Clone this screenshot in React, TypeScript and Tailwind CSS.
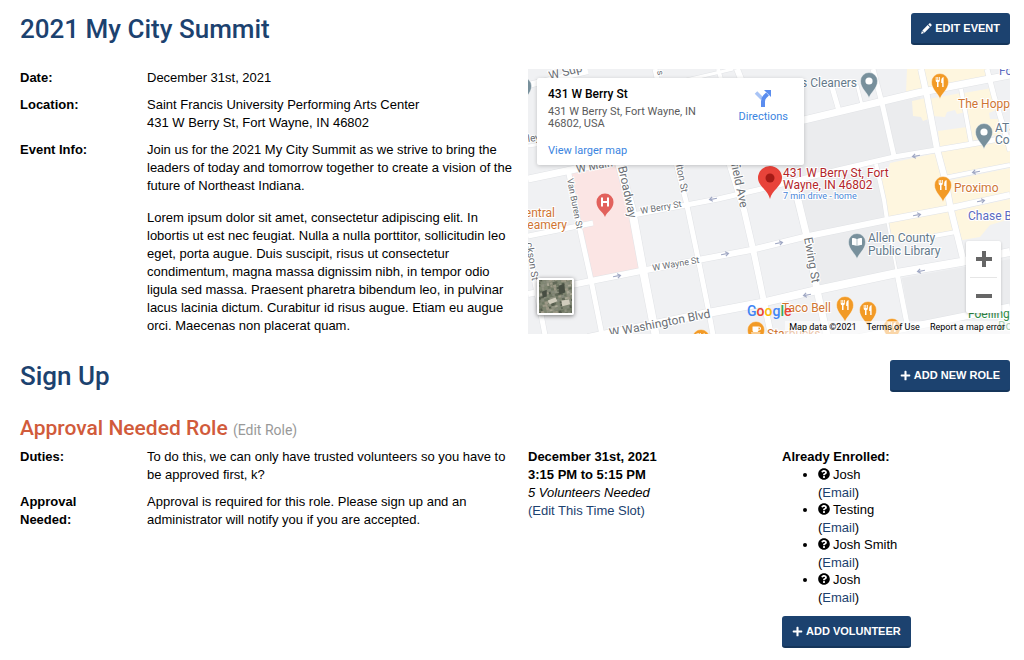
import React from "react";
import { FaPlus, FaQuestionCircle, FaCoffee, FaBookOpen } from "react-icons/fa";

type Pt = [number, number];

const line = (pts: Pt[]) => "M" + pts.map((p) => p.join(" ")).join("L");

const roads: { w: number; pts: Pt[] }[] = [
  { w: 7, pts: [[0, 110], [43, 101], [276, 51], [389, 24], [482, 6]] },
  { w: 5, pts: [[0, 167], [65, 154]] },
  { w: 5, pts: [[105, 146], [190, 130], [246, 117], [310, 101], [366, 88], [450, 74], [482, 68]] },
  { w: 6, pts: [[0, 225], [63, 212], [113, 202], [170, 191], [223, 181], [276, 168], [359, 151], [423, 139], [482, 126]] },
  { w: 8, pts: [[60, 269], [180, 244], [233, 234], [289, 221], [369, 204], [433, 193], [482, 183]] },
  { w: 7, pts: [[290, 277], [378, 259], [482, 238]] },
  { w: 4, pts: [[416, 109], [446, 103], [482, 96]] },
  { w: 4, pts: [[406, 167], [428, 163]] },
  { w: 3, pts: [[0, 77], [30, 73]] },
  { w: 6, pts: [[0, 16], [60, 2]] },
  { w: 3, pts: [[158, 11], [205, 0]] },
  { w: 5, pts: [[40, 100], [52, 161], [63, 211], [74, 266]] },
  { w: 8, pts: [[90, 90], [104, 141], [115, 201], [128, 268]] },
  { w: 5, pts: [[127, 0], [147, 90], [158, 132], [171, 194], [181, 244], [185, 266]] },
  { w: 4, pts: [[190, 0], [196, 20]] },
  { w: 6, pts: [[209, 0], [215, 15]] },
  { w: 6, pts: [[200, 90], [216, 141], [225, 180], [235, 228], [243, 266]] },
  { w: 7, pts: [[262, 112], [270, 131], [279, 168], [289, 221], [299, 266]] },
  { w: 5, pts: [[304, 18], [311, 42]] },
  { w: 3, pts: [[329, 16], [334, 36]] },
  { w: 5, pts: [[345, 0], [354, 34], [366, 87]] },
  { w: 4, pts: [[348, 95], [356, 131], [359, 151]] },
  { w: 2, pts: [[359, 151], [369, 204]] },
  { w: 5, pts: [[369, 204], [380, 260]] },
  { w: 6, pts: [[393, 0], [399, 27], [409, 80], [417, 110], [423, 141], [436, 194]] },
  { w: 4, pts: [[433, 20], [443, 74]] },
  { w: 5, pts: [[459, 0], [466, 27], [479, 70], [482, 82]] },
  { w: 5, pts: [[0, 176], [7, 214], [17, 266]] },
];

const commercial = [
  "379,0 393,0 397,21 378,24",
  "384,32 398,29 403,49 395,52 393,48 385,47",
  "401,30 433,24 438,43 429,45 427,41 419,43 417,48 405,47",
  "410,62 439,58 443,73 412,79",
  "396,0 459,0 462,10 399,22",
  "436,24 464,19 470,40 461,44 462,50 473,50 476,64 444,72",
  "362,94 409,84 423,139 361,151 358,140 352,112 358,106",
  "361,153 422,141 427,161 400,168 364,173",
  "412,82 482,71 482,94 418,106",
  "418,112 482,99 482,124 424,136",
  "426,142 482,130 482,150 462,156 452,168 434,171",
];

const arrows: [number, number, boolean][] = [
  [185, 130, true],
  [89, 207, false],
  [197, 185, false],
  [251, 174, false],
  [389, 146, false],
  [453, 132, false],
  [388, 87, true],
  [448, 103, true],
  [393, 202, true],
  [279, 226, true],
];

type PinIcon = "fork" | "coffee" | "book" | "dot";

function Pin({ x, y, color, icon }: { x: number; y: number; color: string; icon: PinIcon }) {
  return (
    <g transform={`translate(${x} ${y})`}>
      <path
        d="M0 17C-1.500 11.500-8.500 7.500-8.500 0A8.500 8.500 0 0 1 8.500 0C8.500 7.500 1.500 11.500 0 17Z"
        fill={color}
        stroke="#fff"
        strokeOpacity=".6"
        strokeWidth=".7"
      />
      {icon === "dot" && <circle r="3.600" fill="#fff" />}
      {icon === "fork" && (
        <path
          d="M-4.300-5v3.500c0 1 .6 1.600 1.300 1.800V5h1.500V.3c.7-.2 1.300-.8 1.300-1.800V-5H-1v3h-.7v-3h-1v3h-.7v-3zM3.600-5C2-4.600 1.200-3 1.200-1.500V1h1V5h1.400z"
          fill="#fff"
        />
      )}
      {icon === "coffee" && <FaCoffee x={-5} y={-5} size={10} color="#fff" />}
      {icon === "book" && <FaBookOpen x={-5} y={-5} size={10} color="#fff" />}
    </g>
  );
}

function MapDrawing() {
  return (
    <svg
      className="block h-full w-full"
      viewBox="0 0 482 265"
      preserveAspectRatio="xMidYMid slice"
      fontFamily="Roboto, sans-serif"
      role="img"
      aria-label="Map of downtown Fort Wayne"
    >
      <rect width="482" height="265" fill="#f0f1f3" />
      <path d="M276 54 354 36 392 28 409 82 310 100 262 112ZM262 118 348 99 369 204 290 221ZM374 209 436 198 482 190V236L382 256Z" fill="#ebecee" />
      {commercial.map((p) => (
        <polygon key={p} points={p} fill="#fef6df" />
      ))}
      <polygon points="43,101 92,92 111,200 64,209" fill="#fbe5e4" />
      {roads.map((r, i) => (
        <path key={i} d={line(r.pts)} stroke="#e1e3e6" strokeWidth={r.w + 1} fill="none" />
      ))}
      {roads.map((r, i) => (
        <path key={i} d={line(r.pts)} stroke="#fff" strokeWidth={r.w} fill="none" />
      ))}
      {arrows.map(([x, y, left], i) => (
        <path
          key={i}
          transform={`translate(${x} ${y}) rotate(${left ? 169 : -11})`}
          d="M-4 0H3M.5-2.200 3.500 0 .5 2.200"
          stroke="#a0a8c4"
          strokeWidth="1.200"
          fill="none"
        />
      ))}

      <g fill="#6b6f75" stroke="#fff" strokeWidth="2" paintOrder="stroke">
        <text fontSize="12" transform="translate(22 11) rotate(-15)">W Sup</text>
        <text fontSize="9" transform="translate(129 2) rotate(80)">s</text>
        <text fontSize="10" transform="translate(0 73) rotate(-8)">ley</text>
        <text fontSize="11" transform="translate(49 104) rotate(-11)">W Main</text>
        <text fontSize="9" transform="translate(39 110) rotate(79)">Van Buren St</text>
        <text fontSize="12" transform="translate(90 98) rotate(78)">Broadway</text>
        <text fontSize="10" transform="translate(148 96) rotate(79)">lton St</text>
        <text fontSize="12" transform="translate(203 95) rotate(78)">field Ave</text>
        <text fontSize="9" transform="translate(113 145) rotate(-10)">W Berry St</text>
        <text fontSize="9" transform="translate(125 202) rotate(-10)">W Wayne St</text>
        <text fontSize="12" transform="translate(82 268) rotate(-11)">W Washington Blvd</text>
        <text fontSize="12" transform="translate(276 169) rotate(80)">Ewing St</text>
        <text fontSize="10" transform="translate(-2 174) rotate(81)">ckson St</text>
      </g>

      <Pin x={-5} y={17} color="#78909c" icon="dot" />
      <Pin x={341} y={12} color="#78909c" icon="dot" />
      <Pin x={412} y={13} color="#f29a26" icon="fork" />
      <Pin x={456} y={63} color="#78909c" icon="dot" />
      <Pin x={415} y={116} color="#f29a26" icon="fork" />
      <Pin x={329} y={173} color="#78909c" icon="book" />
      <Pin x={317} y={236} color="#f29a26" icon="fork" />
      <Pin x={340} y={241} color="#f29a26" icon="fork" />
      <Pin x={364} y={258} color="#f29a26" icon="fork" />
      <Pin x={228} y={261} color="#f29a26" icon="coffee" />
      <Pin x={173} y={269} color="#f29a26" icon="fork" />
      <g transform="translate(77 133)">
        <path d="M0 15C-1.500 10-8.500 7.500-8.500 0A8.500 8.500 0 0 1 8.500 0C8.500 7.500 1.500 10 0 15Z" fill="#e2615c" />
        <path d="M-3-4.500V4.500M3-4.500V4.500M-3 0H3" stroke="#fff" strokeWidth="2" fill="none" />
      </g>

      <g stroke="#fff" strokeWidth="2" paintOrder="stroke" fontSize="12">
        <g fill="#64798a">
          <text x="273" y="18">s Cleaners</text>
          <text x="467" y="63">AT&amp;T</text>
          <text x="467" y="75">Co</text>
          <text x="340" y="173">Allen County</text>
          <text x="340" y="186">Public Library</text>
        </g>
        <g fill="#cf7532">
          <text x="430" y="39">The Hopp</text>
          <text x="426" y="123">Proximo</text>
          <text x="27" y="148" textAnchor="end">entral</text>
          <text x="39" y="160" textAnchor="end">eamery</text>
          <text x="254" y="243">Taco Bell</text>
          <text x="239" y="269">Starbucks</text>
        </g>
        <g fill="#5c6bc0">
          <text x="471" y="6">Fo</text>
          <text x="440" y="151">Chase B</text>
        </g>
        <g fill="#2e8b45">
          <text x="440" y="249">Foelling</text>
          <text x="470" y="261">Bo</text>
        </g>
        <g fill="#b3262a">
          <text x="255" y="108">431 W Berry St, Fort</text>
          <text x="255" y="120">Wayne, IN 46802</text>
        </g>
        <text x="255" y="130" fontSize="9" fill="#4a86d8">7 min drive - home</text>
      </g>

      <path d="M242 130C240 121 230 117 230 109A12 12 0 0 1 254 109C254 117 244 121 242 130Z" fill="#e8433a" />
      <circle cx="242" cy="109" r="4.500" fill="#a51b16" />
    </svg>
  );
}

function Satellite() {
  const tones = ["#6f7764", "#8f9180", "#626958", "#aaa896", "#7f8672", "#555c4d", "#9d9987", "#85897a"];
  const cells = Array.from({ length: 196 }, (_, i) => ({
    x: (i % 14) * 3 - 4,
    y: Math.floor(i / 14) * 3 - 4,
    t: tones[Math.floor(Math.abs(Math.sin(i * 12.9898) * 43758.5453)) % 8],
  }));
  return (
    <svg className="block h-full w-full" viewBox="0 0 34 34" aria-hidden="true">
      <rect width="34" height="34" fill="#7f8470" />
      <g transform="rotate(-12 17 17)">
        {cells.map((c, i) => (
          <rect key={i} x={c.x} y={c.y} width={2 + (i % 3)} height={2 + (i % 2)} fill={c.t} />
        ))}
      </g>
      <path d="M9 21 17 18 19 22 11 25ZM23 21 31 20 32 25 24 27Z" fill="#d0ccbc" />
      <path d="M20 6 26 4 27 13 21 15ZM3 12 8 10 8 17 4 18Z" fill="#474d42" />
    </svg>
  );
}

function EventMap() {
  return (
    <div className="relative h-[265px] overflow-hidden font-['Roboto',sans-serif]">
      <MapDrawing />
      <div className="absolute top-[9px] left-[9px] flex w-[267px] justify-between rounded-xs bg-white pt-[9px] pr-4 pb-2 pl-[11px] shadow-[0_1px_4px_rgba(0,0,0,0.2)]">
        <div className="w-[160px]">
          <div className="text-[12px] leading-[14px] font-medium text-black">431 W Berry St</div>
          <div className="mt-[5px] text-[11px] leading-[12px] text-[#5b5b5b]">431 W Berry St, Fort Wayne, IN 46802, USA</div>
          <a href="#map" className="mt-[14px] block text-[11px] leading-[13px] text-[#3a84df]">View larger map</a>
        </div>
        <a href="#directions" className="flex flex-col items-center text-[11px] leading-[13px] text-[#3a84df]">
          <svg className="mt-0.5 mb-[3px] h-[18px] w-[18px]" viewBox="0 0 18 18" aria-hidden="true">
            <path d="M2 3.500 8 9.500" stroke="#a9c4f6" strokeWidth="3.500" fill="none" />
            <path d="M9 18V12.500Q9 9.500 11 7.500L13.500 5" stroke="#5b8def" strokeWidth="4" fill="none" />
            <path d="M10 1H17V8Z" fill="#5b8def" />
          </svg>
          Directions
        </a>
      </div>
      <button type="button" aria-label="Show satellite imagery" className="absolute top-[209px] left-[9px] h-[37px] w-[37px] rounded-xs border-2 border-white shadow-[0_1px_4px_rgba(0,0,0,0.5)]">
        <Satellite />
      </button>
      <div className="absolute right-[9px] bottom-[21px] flex w-[35px] flex-col items-center rounded-xs bg-white shadow-[0_1px_3px_rgba(0,0,0,0.2)]">
        <button type="button" aria-label="Zoom in" className="flex h-9 w-full items-center justify-center">
          <svg className="h-4 w-4" viewBox="0 0 16 16"><path d="M0 8H16M8 0V16" stroke="#666" strokeWidth="4" /></svg>
        </button>
        <div className="h-px w-[27px] bg-[#e6e6e6]" />
        <button type="button" aria-label="Zoom out" className="flex h-[35px] w-full items-center justify-center">
          <svg className="h-4 w-4" viewBox="0 0 16 16"><path d="M0 8H16" stroke="#666" strokeWidth="4" /></svg>
        </button>
      </div>
      <div className="absolute top-[234px] left-[219px] text-[14px] leading-[16px] font-medium" aria-label="Google">
        <span className="text-[#4285f4]">G</span>
        <span className="text-[#ea4335]">o</span>
        <span className="text-[#fbbc05]">o</span>
        <span className="text-[#4285f4]">g</span>
        <span className="text-[#34a853]">l</span>
        <span className="text-[#ea4335]">e</span>
      </div>
      <div className="absolute right-0 bottom-0 flex gap-[10px] bg-white/60 pr-[5px] pl-1 text-[9px] leading-[13px] text-black">
        <span>Map data ©2021</span>
        <a href="#terms">Terms of Use</a>
        <a href="#report">Report a map error</a>
      </div>
    </div>
  );
}

function ActionButton({ icon, children }: { icon: React.ReactNode; children: React.ReactNode }) {
  return (
    <button
      type="button"
      className="flex h-8 shrink-0 items-center gap-[3px] rounded-[3px] border-b-2 border-[#15355a] bg-[#1c426f] px-[10px] text-[11px] leading-4 font-bold text-white uppercase"
    >
      {icon}
      {children}
    </button>
  );
}

const Pencil = () => (
  <svg className="h-[11px] w-[11px]" viewBox="0 0 11 11" fill="#fff" aria-hidden="true">
    <path d="M8.200.6a1 1 0 0 1 1.400 0l.8.8a1 1 0 0 1 0 1.400l-.9.900L7.300 1.500zM6.700 2.100 8.900 4.300 3.500 9.700 1.300 7.500zM.9 8 3 10.100.1 10.900z" />
  </svg>
);

const intro = [
  "Join us for the 2021 My City Summit as we strive to bring the",
  "leaders of today and tomorrow together to create a vision of the",
  "future of Northeast Indiana.",
];

const lorem = [
  "Lorem ipsum dolor sit amet, consectetur adipiscing elit. In",
  "lobortis ut est nec feugiat. Nulla a nulla porttitor, sollicitudin leo",
  "eget, porta augue. Duis suscipit, risus ut consectetur",
  "condimentum, magna massa dignissim nibh, in tempor odio",
  "ligula sed massa. Praesent pharetra bibendum leo, in pulvinar",
  "lacus lacinia dictum. Curabitur id risus augue. Etiam eu augue",
  "orci. Maecenas non placerat quam.",
];

const duties = ["To do this, we can only have trusted volunteers so you have to", "be approved first, k?"];

function Lines({ lines }: { lines: string[] }) {
  return (
    <p className="whitespace-nowrap">
      {lines.map((text) => (
        <React.Fragment key={text}>
          {text}
          <br />
        </React.Fragment>
      ))}
    </p>
  );
}

function Field({ label, children }: { label: string; children: React.ReactNode }) {
  return (
    <div className="grid grid-cols-4 gap-x-[26px]">
      <dt className="font-bold">{label}</dt>
      <dd className="col-span-3 flex flex-col gap-[14px]">{children}</dd>
    </div>
  );
}

const volunteers = ["Josh", "Testing", "Josh Smith", "Josh"];

export default function App() {
  return (
    <main className="bg-white pt-[13px] pr-[14px] pb-3 pl-5 font-['Liberation_Sans',Arial,sans-serif] text-[13px] leading-[18px] text-black">
      <header className="flex items-center justify-between">
        <h1 className="font-['Roboto',sans-serif] text-[26px] leading-8 font-medium text-[#1c426f]">2021 My City Summit</h1>
        <ActionButton icon={<Pencil />}>Edit Event</ActionButton>
      </header>

      <section className="mt-6 grid grid-cols-2 gap-x-[26px]">
        <dl className="flex flex-col gap-[9px]">
          <Field label="Date:">December 31st, 2021</Field>
          <Field label="Location:">
            <Lines lines={["Saint Francis University Performing Arts Center", "431 W Berry St, Fort Wayne, IN 46802"]} />
          </Field>
          <Field label="Event Info:">
            <Lines lines={intro} />
            <Lines lines={lorem} />
          </Field>
        </dl>
        <EventMap />
      </section>

      <section className="mt-[25px]">
        <div className="flex items-center justify-between">
          <h2 className="font-['Roboto',sans-serif] text-[26px] leading-8 font-medium text-[#1c426f]">Sign Up</h2>
          <ActionButton icon={<FaPlus size={11} />}>Add New Role</ActionButton>
        </div>
        <h3 className="mt-[22px] font-['Roboto',sans-serif] text-[21px] leading-7 font-medium text-[#d15b3b]">
          Approval Needed Role{" "}
          <a href="#edit-role" className="text-[14px] font-normal text-[#999]">(Edit Role)</a>
        </h3>
        <div className="mt-1 grid grid-cols-4 gap-x-[26px]">
          <dl className="col-span-2 flex flex-col gap-[9px]">
            <Field label="Duties:">
              <Lines lines={duties} />
            </Field>
            <Field label="Approval Needed:">
              <p>Approval is required for this role. Please sign up and an administrator will notify you if you are accepted.</p>
            </Field>
          </dl>
          <div>
            <p className="font-bold">December 31st, 2021</p>
            <p className="font-bold">3:15 PM to 5:15 PM</p>
            <p className="italic">5 Volunteers Needed</p>
            <a href="#edit-slot" className="text-[#1c426f]">(Edit This Time Slot)</a>
          </div>
          <div>
            <p className="font-bold">Already Enrolled:</p>
            <ul className="mb-[10px] list-disc pl-9">
              {volunteers.map((name, i) => (
                <li key={i}>
                  <FaQuestionCircle size={12} className="mr-[3px] inline-block align-[-1px]" />
                  {name}
                  <div className="leading-[17px]">
                    (<a href="#email" className="text-[#1c426f]">Email</a>)
                  </div>
                </li>
              ))}
            </ul>
            <ActionButton icon={<FaPlus size={11} />}>Add Volunteer</ActionButton>
          </div>
        </div>
      </section>
    </main>
  );
}
